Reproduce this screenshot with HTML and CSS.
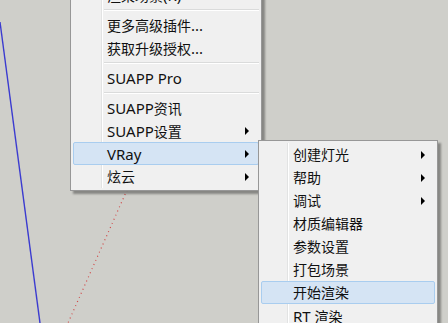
FILE: index.html
```html
<!DOCTYPE html>
<html lang="zh-CN">
<head>
  <meta charset="UTF-8">
  <title>SUAPP VRay 菜单</title>
  <link rel="stylesheet" href="styles.css">
</head>
<body>
  <div class="viewport">
    <svg class="scene" width="448" height="323" viewBox="0 0 448 323">
      <line x1="0" y1="22" x2="40" y2="323" stroke="#3b3bd0" stroke-width="1.4"/>
      <line x1="127" y1="190" x2="68" y2="323" stroke="#d04848" stroke-width="1.2" stroke-dasharray="1 3.5"/>
    </svg>

    <div class="menu main-menu">
      <div class="item">渲染场景<span class="en">(R)</span></div>
      <div class="sep"></div>
      <div class="item">更多高级插件<span class="en">...</span></div>
      <div class="item">获取升级授权<span class="en">...</span></div>
      <div class="sep"></div>
      <div class="item"><span class="en">SUAPP Pro</span></div>
      <div class="sep"></div>
      <div class="item"><span class="en">SUAPP</span>资讯</div>
      <div class="item has-sub"><span class="en">SUAPP</span>设置<span class="arrow"></span></div>
      <div class="item has-sub active"><span class="en">VRay</span><span class="arrow"></span></div>
      <div class="item has-sub">炫云<span class="arrow"></span></div>
    </div>

    <div class="menu sub-menu">
      <div class="item has-sub">创建灯光<span class="arrow"></span></div>
      <div class="item has-sub">帮助<span class="arrow"></span></div>
      <div class="item has-sub">调试<span class="arrow"></span></div>
      <div class="item">材质编辑器</div>
      <div class="item">参数设置</div>
      <div class="item">打包场景</div>
      <div class="item active">开始渲染</div>
      <div class="item"><span class="en">RT </span>渲染</div>
    </div>
  </div>
</body>
</html>
```

FILE: styles.css
```css
body {
  margin: 0;
  background: #cfcfca;
  font-family: "Noto Sans", "Noto Sans CJK SC", sans-serif;
  font-size: 14px;
  color: #111;
}
.viewport {
  position: relative;
  width: 448px;
  height: 323px;
  overflow: hidden;
  background: #cfcfca;
}
.scene {
  position: absolute;
  top: 0;
  left: 0;
}
.menu {
  position: absolute;
  box-sizing: border-box;
  background: #f0f0f0;
  border: 1px solid #979797;
  padding: 2px;
  box-shadow: 3px 3px 2px rgba(0, 0, 0, 0.35);
}
/* gutter divider line */
.menu::before {
  content: "";
  position: absolute;
  top: 2px;
  bottom: 2px;
  width: 1px;
  background: #e2e3e3;
  box-shadow: 1px 0 0 #fff;
}
.main-menu {
  left: 70px;
  top: -20px;
  width: 192px;
}
.main-menu::before {
  left: 30px;
}
.sub-menu {
  left: 258px;
  top: 140px;
  width: 180px;
}
.sub-menu::before {
  left: 28px;
}
.item {
  position: relative;
  box-sizing: border-box;
  height: 23px;
  line-height: 22px;
  padding-left: 33px;
  white-space: nowrap;
  border: 1px solid transparent;
}
.item .en {
  font-size: 15px;
}
.sub-menu .item {
  padding-left: 31px;
}
.item.active {
  background: #d5e4f4;
  border-color: #a9cdef;
  border-radius: 2px;
}
.sep {
  height: 7px;
  margin-left: 31px;
  position: relative;
}
.sep::after {
  content: "";
  position: absolute;
  left: 0;
  right: 0;
  top: 3px;
  height: 1px;
  background: #dadbdb;
  box-shadow: 0 1px 0 #fff;
}
.arrow {
  position: absolute;
  right: 9px;
  top: 7px;
  width: 0;
  height: 0;
  border-left: 4px solid #000;
  border-top: 4px solid transparent;
  border-bottom: 4px solid transparent;
}
```
